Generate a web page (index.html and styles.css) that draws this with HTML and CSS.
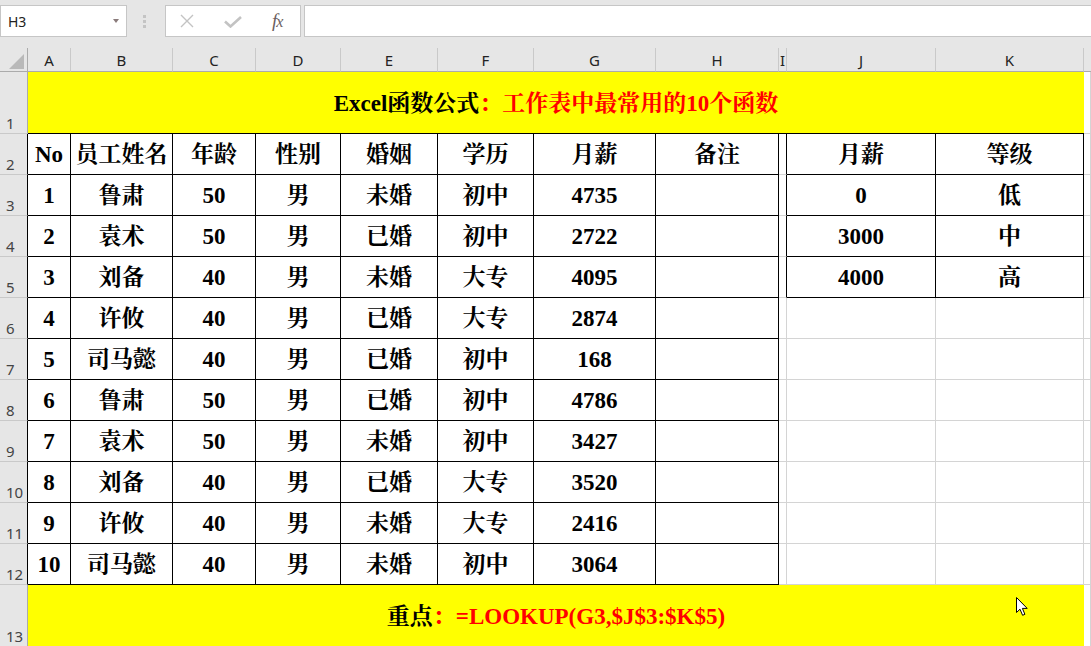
FILE: index.html
```html
<!DOCTYPE html>
<html lang="zh-CN">
<head>
<meta charset="utf-8">
<title>Excel函数公式</title>
<link rel="stylesheet" href="styles.css">
</head>
<body>
<div class="app">
  <div class="toolbar">
    <div class="namebox"><span class="nb-text">H3</span><span class="nb-arrow"></span></div>
    <div class="grip"><i></i><i></i><i></i></div>
    <div class="fxbox">
      <svg class="ic-x" width="16" height="14" viewBox="0 0 16 14"><path d="M2 1 L14 13 M14 1 L2 13" stroke="#c3c3c3" stroke-width="1.4" fill="none"/></svg>
      <svg class="ic-ok" width="18" height="12" viewBox="0 0 18 12"><path d="M1 5.5 L6.5 10.5 L17 1" stroke="#c3c3c3" stroke-width="2.6" fill="none"/></svg>
      <span class="ic-fx"><span class="fx-f">f</span>x</span>
    </div>
    <div class="formula"></div>
  </div>

  <div class="sheet">
    <!-- header row -->
    <div class="corner"><span class="tri"></span></div>
    <div class="ch">A</div><div class="ch">B</div><div class="ch">C</div><div class="ch">D</div>
    <div class="ch">E</div><div class="ch">F</div><div class="ch">G</div><div class="ch">H</div>
    <div class="ch">I</div><div class="ch">J</div><div class="ch">K</div><div class="ch last"></div>

    <!-- row 1 -->
    <div class="rh"><span>1</span></div>
    <div class="title"><span class="blk">Excel函数公式</span><span class="red">：工作表中最常用的10个函数</span></div>
    <div class="cell"></div>

    <!-- row 2 -->
    <div class="rh rhb"><span>2</span></div>
    <div class="tb">No</div><div class="tb">员工姓名</div><div class="tb">年龄</div><div class="tb">性别</div>
    <div class="tb">婚姻</div><div class="tb">学历</div><div class="tb">月薪</div><div class="tb">备注</div>
    <div class="cell ib"></div><div class="tb">月薪</div><div class="tb">等级</div><div class="cell"></div>

    <!-- row 3 -->
    <div class="rh rhb"><span>3</span></div>
    <div class="tb">1</div><div class="tb">鲁肃</div><div class="tb">50</div><div class="tb">男</div>
    <div class="tb">未婚</div><div class="tb">初中</div><div class="tb">4735</div><div class="tb"></div>
    <div class="cell ib"></div><div class="tb">0</div><div class="tb">低</div><div class="cell"></div>

    <!-- row 4 -->
    <div class="rh rhb"><span>4</span></div>
    <div class="tb">2</div><div class="tb">袁术</div><div class="tb">50</div><div class="tb">男</div>
    <div class="tb">已婚</div><div class="tb">初中</div><div class="tb">2722</div><div class="tb"></div>
    <div class="cell ib"></div><div class="tb">3000</div><div class="tb">中</div><div class="cell"></div>

    <!-- row 5 -->
    <div class="rh rhb"><span>5</span></div>
    <div class="tb">3</div><div class="tb">刘备</div><div class="tb">40</div><div class="tb">男</div>
    <div class="tb">未婚</div><div class="tb">大专</div><div class="tb">4095</div><div class="tb"></div>
    <div class="cell ib"></div><div class="tb">4000</div><div class="tb">高</div><div class="cell"></div>

    <!-- row 6 -->
    <div class="rh rhb"><span>6</span></div>
    <div class="tb">4</div><div class="tb">许攸</div><div class="tb">40</div><div class="tb">男</div>
    <div class="tb">已婚</div><div class="tb">大专</div><div class="tb">2874</div><div class="tb"></div>
    <div class="cell"></div><div class="cell"></div><div class="cell"></div><div class="cell"></div>

    <!-- row 7 -->
    <div class="rh rhb"><span>7</span></div>
    <div class="tb">5</div><div class="tb">司马懿</div><div class="tb">40</div><div class="tb">男</div>
    <div class="tb">已婚</div><div class="tb">初中</div><div class="tb">168</div><div class="tb"></div>
    <div class="cell"></div><div class="cell"></div><div class="cell"></div><div class="cell"></div>

    <!-- row 8 -->
    <div class="rh rhb"><span>8</span></div>
    <div class="tb">6</div><div class="tb">鲁肃</div><div class="tb">50</div><div class="tb">男</div>
    <div class="tb">已婚</div><div class="tb">初中</div><div class="tb">4786</div><div class="tb"></div>
    <div class="cell"></div><div class="cell"></div><div class="cell"></div><div class="cell"></div>

    <!-- row 9 -->
    <div class="rh rhb"><span>9</span></div>
    <div class="tb">7</div><div class="tb">袁术</div><div class="tb">50</div><div class="tb">男</div>
    <div class="tb">未婚</div><div class="tb">初中</div><div class="tb">3427</div><div class="tb"></div>
    <div class="cell"></div><div class="cell"></div><div class="cell"></div><div class="cell"></div>

    <!-- row 10 -->
    <div class="rh rhb"><span>10</span></div>
    <div class="tb">8</div><div class="tb">刘备</div><div class="tb">40</div><div class="tb">男</div>
    <div class="tb">已婚</div><div class="tb">大专</div><div class="tb">3520</div><div class="tb"></div>
    <div class="cell"></div><div class="cell"></div><div class="cell"></div><div class="cell"></div>

    <!-- row 11 -->
    <div class="rh rhb"><span>11</span></div>
    <div class="tb">9</div><div class="tb">许攸</div><div class="tb">40</div><div class="tb">男</div>
    <div class="tb">未婚</div><div class="tb">大专</div><div class="tb">2416</div><div class="tb"></div>
    <div class="cell"></div><div class="cell"></div><div class="cell"></div><div class="cell"></div>

    <!-- row 12 -->
    <div class="rh rhb"><span>12</span></div>
    <div class="tb">10</div><div class="tb">司马懿</div><div class="tb">40</div><div class="tb">男</div>
    <div class="tb">未婚</div><div class="tb">初中</div><div class="tb">3064</div><div class="tb"></div>
    <div class="cell"></div><div class="cell"></div><div class="cell"></div><div class="cell"></div>

    <!-- row 13 -->
    <div class="rh"><span>13</span></div>
    <div class="note"><span class="blk">重点</span><span class="red">：=LOOKUP(G3,$J$3:$K$5)</span></div>
    <div class="cell"></div>
  </div>

  <svg class="cursor" width="13" height="20" viewBox="0 0 13 20"><path d="M0.5 0.5 L0.5 15.5 L4 12.2 L6.6 18.3 L8.9 17.3 L6.4 11.4 L11.2 11.4 Z" fill="#fff" stroke="#000" stroke-width="1" stroke-linejoin="miter"/></svg>
</div>
</body>
</html>
```

FILE: styles.css
```css
html, body {
  margin: 0;
  padding: 0;
  background: #ffffff;
}

.app {
  position: relative;
  width: 1091px;
  height: 646px;
  overflow: hidden;
  background: #ffffff;
}

/* ---------- formula toolbar ---------- */
.toolbar {
  height: 48px;
  box-sizing: border-box;
  padding-top: 5px;
  background: #e6e6e6;
  display: flex;
  align-items: flex-start;
}

.namebox {
  width: 127px;
  height: 32px;
  box-sizing: border-box;
  border: 1px solid #c6c6c6;
  background: #fff;
  display: flex;
  align-items: center;
  justify-content: space-between;
  padding: 0 6px 0 7px;
  font: 14px "Noto Sans", "Open Sans", sans-serif;
  color: #222;
}

.nb-arrow {
  width: 0;
  height: 0;
  border-left: 3.5px solid transparent;
  border-right: 3.5px solid transparent;
  border-top: 4px solid #8a7b7b;
  margin-right: 1px;
}

.grip {
  margin-left: 16px;
  width: 4px;
  height: 32px;
  display: flex;
  flex-direction: column;
  justify-content: center;
  gap: 2px;
}
.grip i {
  display: block;
  width: 3px;
  height: 3px;
  background: #c4c4c4;
}

.fxbox {
  margin-left: 18px;
  width: 136px;
  height: 32px;
  box-sizing: border-box;
  border: 1px solid #c6c6c6;
  background: #fff;
  display: flex;
  align-items: center;
  padding-left: 13px;
}
.ic-x { display: block; }
.ic-ok { display: block; margin-left: 29px; margin-top: 2px; }
.ic-fx {
  margin-left: 30px;
  font: italic 16px "Liberation Serif", serif;
  color: #6a5e5e;
  letter-spacing: 0;
}
.fx-f { font-size: 19px; margin-right: -1px; }

.formula {
  margin-left: 3px;
  flex: 1;
  height: 32px;
  box-sizing: border-box;
  border: 1px solid #c6c6c6;
  border-right: none;
  background: #fff;
}

/* ---------- sheet grid ---------- */
.sheet {
  display: grid;
  grid-template-columns: 28px 43px 102px 83px 85px 97px 96px 122px 123px 8px 149px 148px 1fr;
  grid-template-rows: 24px 62px repeat(11, 41px) 62px;
}

.sheet > div {
  box-sizing: border-box;
  min-width: 0;
}

.corner {
  background: #e6e6e6;
  border-right: 1px solid #ababab;
  border-bottom: 1px solid #ababab;
  position: relative;
}
.tri {
  position: absolute;
  right: 3px;
  bottom: 2px;
  width: 0;
  height: 0;
  border-left: 15px solid transparent;
  border-bottom: 15px solid #b9b9b9;
}

.ch {
  background: #e6e6e6;
  border-right: 1px solid #c9c9c9;
  border-bottom: 1px solid #ababab;
  display: flex;
  align-items: center;
  justify-content: center;
  font: 15px "Noto Sans", "Open Sans", sans-serif;
  color: #222;
  line-height: 1;
  padding-top: 1px;
  overflow: hidden;
}
.ch.last { border-right: none; }

.rh {
  background: #e6e6e6;
  border-right: 1px solid #ababab;
  border-bottom: 1px solid #c9c9c9;
  display: flex;
  align-items: flex-end;
  padding: 0 0 2px 6px;
  font: 15px "Noto Sans", "Open Sans", sans-serif;
  color: #444;
  line-height: 1;
}
.rhb { border-right-color: #000; }

.cell {
  background: #fff;
  border-right: 1px solid #d4d4d4;
  border-bottom: 1px solid #d4d4d4;
}
.ib { border-right-color: #000; }

.tb {
  background: #fff;
  border-right: 1px solid #000;
  border-bottom: 1px solid #000;
  display: flex;
  align-items: center;
  justify-content: center;
  font: bold 23px "Liberation Serif", "Noto Serif CJK SC", "Noto Sans CJK SC", serif;
  color: #000;
  line-height: 1;
  white-space: nowrap;
  padding-top: 1px;
}

.title,
.note {
  grid-column: span 11;
  background: #ffff00;
  display: flex;
  align-items: center;
  justify-content: center;
  font: bold 23px "Liberation Serif", "Noto Serif CJK SC", "Noto Sans CJK SC", serif;
  line-height: 1;
  white-space: nowrap;
}
.title {
  border-bottom: 1px solid #000;
  padding-top: 2px;
}
.note { padding-top: 0; }

.blk { color: #000; }
.red { color: #ff0000; }

.cursor {
  position: absolute;
  left: 1016px;
  top: 597px;
}
```
